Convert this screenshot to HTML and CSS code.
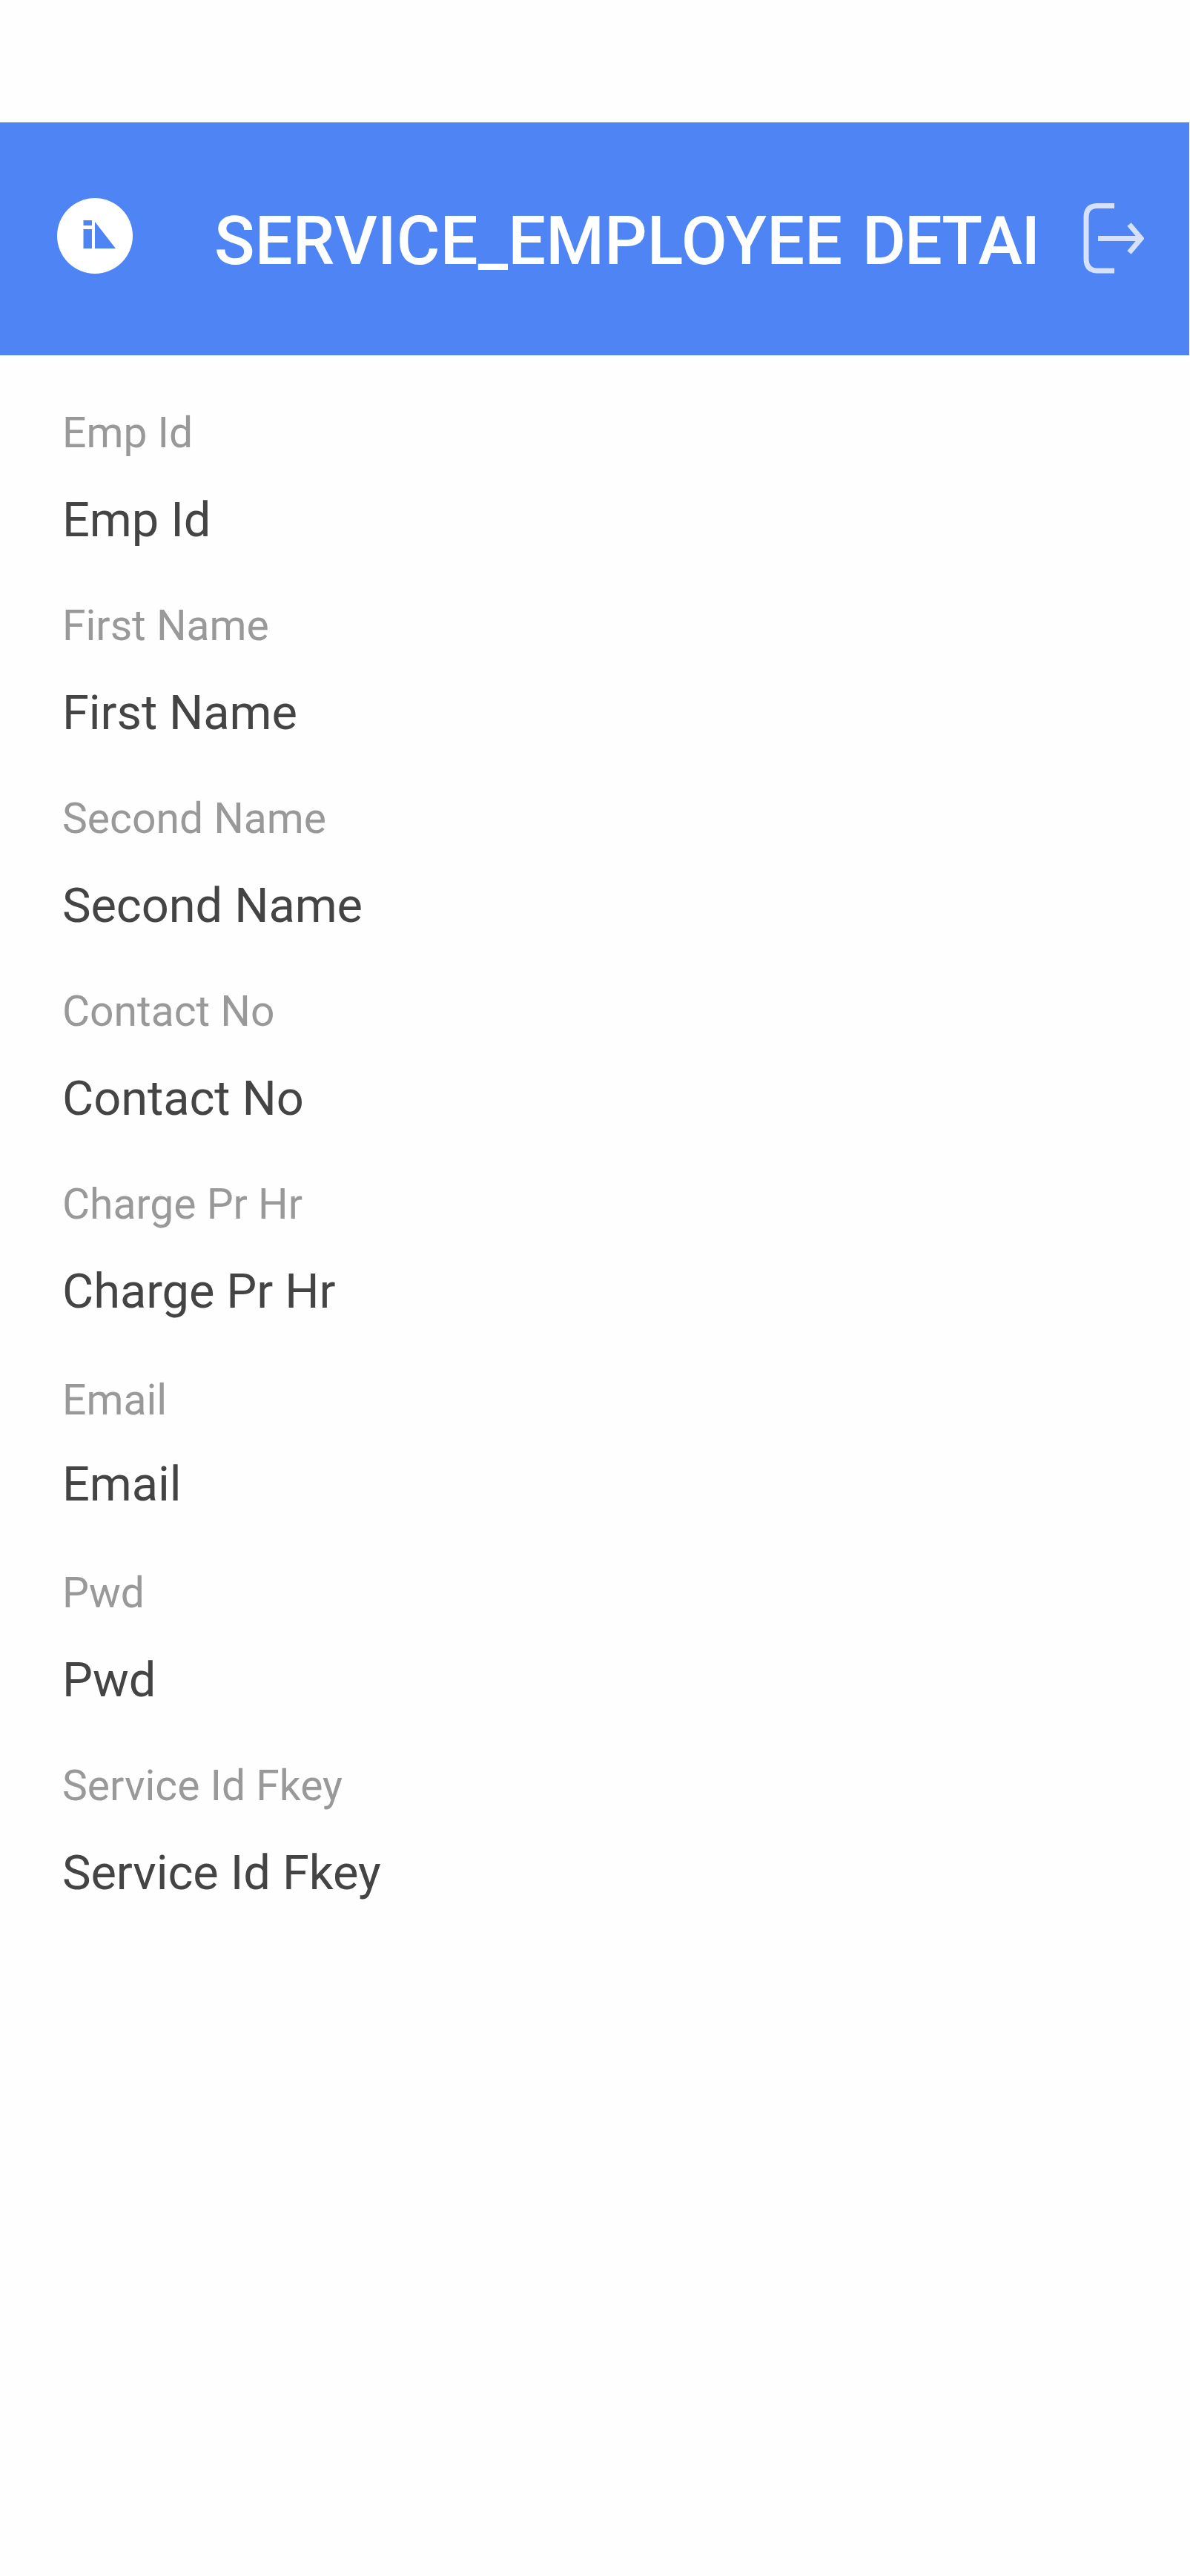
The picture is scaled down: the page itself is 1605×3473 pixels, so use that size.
FILE: index.html
```html
<!DOCTYPE html>
<html lang="en">
<head>
<meta charset="utf-8">
<title>Service Employee Details</title>
<link rel="stylesheet" href="styles.css">
</head>
<body>
<header class="bar">
  <svg class="logo" viewBox="0 0 102 102" aria-hidden="true"><circle cx="51" cy="51" r="51" fill="#fff"/><path d="M35.5 30h11.500v7h-11.500zM35.500 42h11.500v26h-11.500zM51 32v36h28z" fill="#4e84f3"/></svg>
  <h1 class="title">SERVICE_EMPLOYEE <span class="tight">DETAI</span></h1>
  <svg class="exit" viewBox="0 0 82 96" fill="none" stroke="#d6e2fd" stroke-width="7" aria-hidden="true"><path d="M42 4.500H18Q4 5 4 20V76Q4 91 18 92H42M20 48.500H76"/><path d="M62 29.500L78 48.500L62 67.500"/></svg>
</header>
<dl class="details">
  <div class="field"><dt>Emp Id</dt><dd>Emp Id</dd></div>
  <div class="field"><dt>First Name</dt><dd>First Name</dd></div>
  <div class="field"><dt>Second Name</dt><dd>Second Name</dd></div>
  <div class="field"><dt>Contact No</dt><dd>Contact No</dd></div>
  <div class="field"><dt>Charge Pr Hr</dt><dd>Charge Pr Hr</dd></div>
  <div class="field field-email"><dt>Email</dt><dd>Email</dd></div>
  <div class="field"><dt>Pwd</dt><dd>Pwd</dd></div>
  <div class="field"><dt>Service Id Fkey</dt><dd>Service Id Fkey</dd></div>
</dl>
</body>
</html>
```
FILE: styles.css
```css
* { box-sizing: border-box; margin: 0; }
body { background: #fefefe; font-family: Roboto, sans-serif; padding-top: 165px; }
.bar { display: flex; width: 1604px; height: 314px; padding: 0 61px 0 77px; background: #4e84f3; }
.logo { flex: none; width: 102px; height: 102px; margin-top: 102px; }
.title { flex: 1; margin: 108px 0 0 110px; color: #fff; font-size: 90px; font-weight: 500; letter-spacing: 0.2px; word-spacing: 4px; line-height: 106px; white-space: nowrap; }
.tight { letter-spacing: -1.6px; }
.exit { flex: none; width: 82px; height: 96px; margin-top: 108px; }
.details { padding: 65px 84px 0; }
.field { height: 260px; }
dt { height: 120px; font-size: 57px; line-height: 80px; color: #999; }
dd { height: 120px; margin: -3px 0 0; font-size: 65px; letter-spacing: -0.1px; line-height: 80px; color: #444; }
.field-email { height: 264px; padding-top: 4px; }
.field-email dd { margin-top: -7px; }
```
